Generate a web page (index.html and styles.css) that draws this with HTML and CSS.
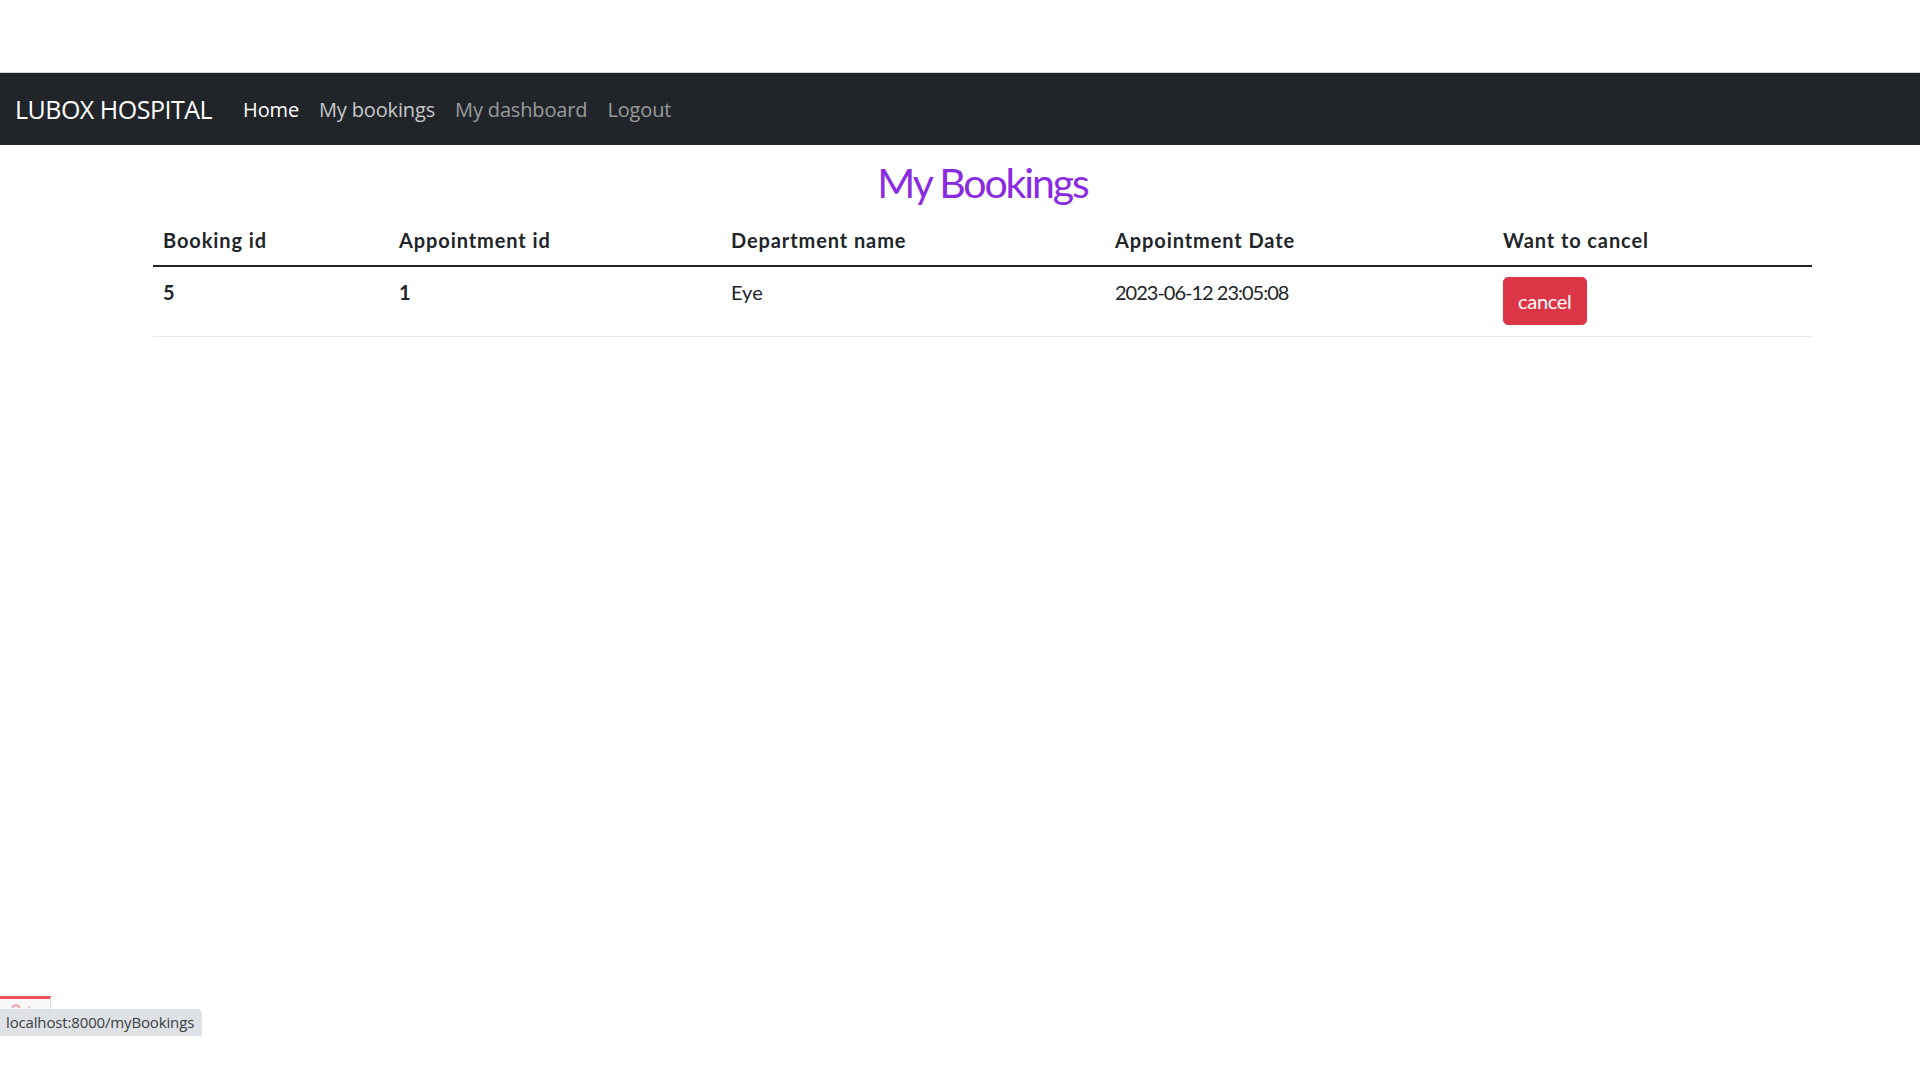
FILE: index.html
```html
<!DOCTYPE html>
<html lang="en">
<head>
<meta charset="utf-8">
<title>My Bookings</title>
<link rel="stylesheet" href="styles.css">
</head>
<body>
<nav class="navbar">
  <a class="brand" href="#">LUBOX HOSPITAL</a>
  <ul class="nav">
    <li><a class="nav-link active" href="#">Home</a></li>
    <li><a class="nav-link hover" href="#">My bookings</a></li>
    <li><a class="nav-link" href="#">My dashboard</a></li>
    <li><a class="nav-link" href="#">Logout</a></li>
  </ul>
</nav>
<main class="container">
  <h1 class="title">My Bookings</h1>
  <table class="table">
    <colgroup>
      <col class="c1"><col class="c2"><col class="c3"><col class="c4"><col class="c5">
    </colgroup>
    <thead>
      <tr>
        <th>Booking id</th>
        <th>Appointment id</th>
        <th>Department name</th>
        <th>Appointment Date</th>
        <th>Want to cancel</th>
      </tr>
    </thead>
    <tbody>
      <tr>
        <th class="rowhead">5</th>
        <td class="bold">1</td>
        <td>Eye</td>
        <td class="date">2023-06-12 23:05:08</td>
        <td><button class="btn-danger" type="button">cancel</button></td>
      </tr>
    </tbody>
  </table>
</main>
<div class="toolbar-tab">
  <svg class="tab-icon" width="30" height="10" viewBox="0 0 30 10"><path d="M12 8 Q16 2 20 8" fill="none" stroke="#f2a0a6" stroke-width="2"/><path d="M29 8 L31 6" stroke="#f2a0a6" stroke-width="2"/></svg>
</div>
<div class="status-bubble">localhost:8000/myBookings</div>
</body>
</html>
```
FILE: styles.css
```css
html, body {
  margin: 0;
  padding: 0;
  background: #ffffff;
}
body {
  padding-top: 72px;
  font-family: Lato, "Liberation Sans", sans-serif;
  color: #212529;
  min-height: 1008px;
  position: relative;
}
.navbar {
  display: flex;
  align-items: center;
  height: 72px;
  border-top: 1px solid #d4d4d4;
  background: #212529;
  padding: 0 15px;
  font-family: "Open Sans", "Noto Sans", sans-serif;
}
.brand {
  color: #ffffff;
  text-decoration: none;
  font-size: 25px;
  margin-right: 21px;
  letter-spacing: -0.5px;
  padding-bottom: 1px;
}
.nav {
  display: flex;
  list-style: none;
  margin: 0;
  padding: 0;
}
.nav-link {
  display: block;
  padding: 8px 10px;
  font-size: 20px;
  text-decoration: none;
  color: rgba(255, 255, 255, 0.55);
  letter-spacing: -0.15px;
}
.nav-link.active {
  color: #ffffff;
}
.nav-link.hover {
  color: rgba(255, 255, 255, 0.75);
}
.container {
  margin-left: 153px;
  width: 1659px;
}
.title {
  margin: 13px 0 8px;
  text-align: center;
  font-size: 41px;
  line-height: 1.2;
  font-weight: 400;
  color: #8a2be2;
  letter-spacing: -2.1px;
}
.table {
  width: 100%;
  border-collapse: collapse;
}
.c1 { width: 236px; }
.c2 { width: 332px; }
.c3 { width: 384px; }
.c4 { width: 388px; }
.c5 { width: 319px; }
.table th,
.table td {
  padding: 10px;
  text-align: left;
  vertical-align: top;
  font-size: 20px;
  line-height: 30px;
}
.table thead th {
  font-weight: 700;
  letter-spacing: 0.9px;
  border-bottom: 2px solid #212529;
}
.table tbody th,
.table tbody td {
  padding-bottom: 11px;
  border-bottom: 1px solid #e6e8ea;
}
.table td.date {
  letter-spacing: -1px;
}
.rowhead,
.bold {
  font-weight: 700;
}
.btn-danger {
  font-family: Lato, "Liberation Sans", sans-serif;
  font-size: 20px;
  line-height: 30px;
  color: #ffffff;
  background: #dc3545;
  border: 1px solid #dc3545;
  border-radius: 5px;
  padding: 8px 14px;
  letter-spacing: -0.3px;
  cursor: pointer;
}
.toolbar-tab {
  position: absolute;
  left: 0;
  top: 996px;
  width: 50px;
  height: 10px;
  border-top: 3px solid #f4505c;
  border-right: 1px solid #d8d8d8;
  background: #f8f8f8;
  overflow: hidden;
}
.tab-icon {
  display: block;
  margin-top: 1px;
}
.status-bubble {
  position: absolute;
  left: 0;
  top: 1009px;
  height: 27px;
  line-height: 27px;
  padding: 0 8px 0 6px;
  background: #dee1e6;
  border-top-right-radius: 5px;
  font-family: "Open Sans", "Noto Sans", sans-serif;
  font-size: 15px;
  color: #3c4043;
  letter-spacing: -0.15px;
}
```
